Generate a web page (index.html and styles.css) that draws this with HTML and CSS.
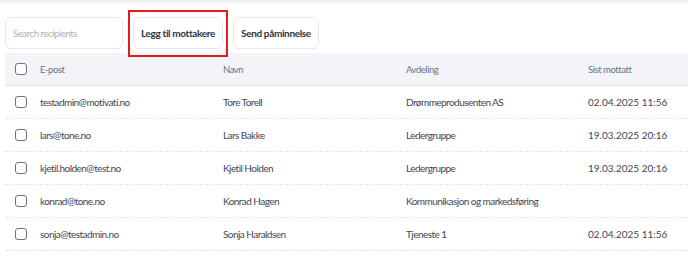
FILE: index.html
```html
<!DOCTYPE html>
<html lang="no">
<head>
    <meta charset="UTF-8">
    <meta name="viewport" content="width=device-width, initial-scale=1.0">
    <title>Mottakere</title>
    <link rel="stylesheet" href="styles.css">
</head>
<body>
    <div class="topbar"></div>

    <div class="toolbar">
        <input class="search" type="text" placeholder="Search recipients">
        <div class="highlight">
            <button class="btn">Legg til mottakere</button>
        </div>
        <button class="btn">Send påminnelse</button>
    </div>

    <div class="table">
        <div class="row head">
            <span class="check"></span>
            <span>E-post</span>
            <span>Navn</span>
            <span>Avdeling</span>
            <span>Sist mottatt</span>
        </div>
        <div class="row">
            <span class="check"></span>
            <span>testadmin@motivati.no</span>
            <span>Tore Torell</span>
            <span>Drømmeprodusenten AS</span>
            <span class="date">02.04.2025 11:56</span>
        </div>
        <div class="row">
            <span class="check"></span>
            <span>lars@tone.no</span>
            <span>Lars Bakke</span>
            <span>Ledergruppe</span>
            <span class="date">19.03.2025 20:16</span>
        </div>
        <div class="row">
            <span class="check"></span>
            <span>kjetil.holden@test.no</span>
            <span>Kjetil Holden</span>
            <span>Ledergruppe</span>
            <span class="date">19.03.2025 20:16</span>
        </div>
        <div class="row">
            <span class="check"></span>
            <span>konrad@tone.no</span>
            <span>Konrad Hagen</span>
            <span>Kommunikasjon og markedsføring</span>
            <span class="date"></span>
        </div>
        <div class="row">
            <span class="check"></span>
            <span>sonja@testadmin.no</span>
            <span>Sonja Haraldsen</span>
            <span>Tjeneste 1</span>
            <span class="date">02.04.2025 11:56</span>
        </div>
    </div>
</body>
</html>
```

FILE: styles.css
```css
body {
    margin: 0;
    background: #fff;
    font-family: Lato, "Liberation Sans", sans-serif;
    color: #3f4654;
    overflow: hidden;
}

.topbar {
    height: 3px;
    background: #f1f2f5;
}

.toolbar {
    display: flex;
    align-items: center;
    gap: 10px;
    padding: 14px 0 4px 5px;
}

.search {
    box-sizing: border-box;
    width: 118px;
    height: 32px;
    padding: 0 7px;
    border: 1px solid #e6e8ec;
    border-radius: 6px;
    font-family: inherit;
    font-size: 9.5px;
    letter-spacing: -0.4px;
    color: #3f4654;
    outline: none;
}

.search::placeholder {
    color: #a9b0bc;
}

.btn {
    box-sizing: border-box;
    height: 32px;
    padding: 0 7px;
    background: #fff;
    border: 1px solid #e6e8ec;
    border-radius: 6px;
    font-family: inherit;
    font-size: 10px;
    font-weight: 700;
    letter-spacing: -0.35px;
    color: #2b3445;
}

.highlight {
    position: relative;
}

/* red annotation frame drawn over the button */
.highlight::after {
    content: "";
    position: absolute;
    left: -5px;
    top: -7px;
    right: -5px;
    bottom: -8px;
    border: 2px solid #e3191c;
}

.table {
    margin-left: 5px;
}

.row {
    display: grid;
    grid-template-columns: 25px 183px 183px 182px 1fr;
    align-items: center;
    height: 33px;
    box-sizing: border-box;
    padding-left: 10px;
    font-size: 10px;
    letter-spacing: -0.55px;
    border-bottom: 1px dashed #e4e6ea;
    white-space: nowrap;
}

.row.head {
    background: #f3f4f7;
    border-bottom: 1px solid #e4e8ee;
    color: #6b7280;
    font-size: 9.5px;
    letter-spacing: -0.45px;
}

.date {
    letter-spacing: 0;
}

.check {
    box-sizing: border-box;
    width: 12px;
    height: 12px;
    border: 1.5px solid #6b7280;
    border-radius: 3px;
    background: #fff;
}
```
